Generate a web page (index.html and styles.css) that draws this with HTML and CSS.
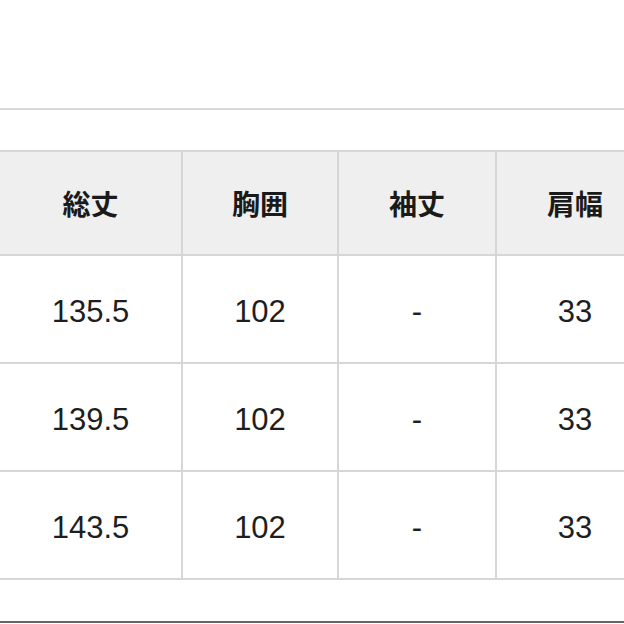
FILE: index.html
```html
<!DOCTYPE html>
<html lang="ja">
<head>
<meta charset="utf-8">
<link rel="stylesheet" href="styles.css">
</head>
<body>
<div class="page">
  <div class="top-space"></div>
  <div class="rule"></div>
  <table class="size-table">
    <thead>
      <tr>
        <th class="c1">総丈</th>
        <th class="c2">胸囲</th>
        <th class="c3">袖丈</th>
        <th class="c4">肩幅</th>
      </tr>
    </thead>
    <tbody>
      <tr><td>135.5</td><td>102</td><td>-</td><td>33</td></tr>
      <tr><td>139.5</td><td>102</td><td>-</td><td>33</td></tr>
      <tr><td>143.5</td><td>102</td><td>-</td><td>33</td></tr>
    </tbody>
  </table>
  <div class="bottom-space"></div>
  <div class="dark-rule"></div>
</div>
</body>
</html>
```

FILE: styles.css
```css
html, body {
  margin: 0;
  padding: 0;
  background: #ffffff;
}
body {
  width: 624px;
  height: 624px;
  overflow: hidden;
  font-family: "Liberation Sans", "Noto Sans CJK JP", sans-serif;
  color: #1e1e1e;
}
.page {
  display: flex;
  flex-direction: column;
  width: 624px;
}
.top-space {
  height: 108px;
}
.rule {
  height: 2px;
  background: #d9d9d9;
  margin-bottom: 40px;
}
.size-table {
  border-collapse: separate;
  border-spacing: 0;
  table-layout: fixed;
  width: 655px;
  border-top: 2px solid #d6d6d6;
}
.size-table th,
.size-table td {
  box-sizing: border-box;
  border-right: 2px solid #d6d6d6;
  border-bottom: 2px solid #d6d6d6;
  text-align: center;
  vertical-align: middle;
  padding: 0;
}
.size-table th {
  height: 104px;
  background: #efefef;
  font-family: "Noto Sans CJK JP", sans-serif;
  font-weight: 700;
  font-size: 28px;
  color: #1a1a1a;
}
.size-table td {
  height: 108px;
  padding-top: 6px;
  font-size: 31px;
  font-weight: 400;
  background: #ffffff;
}
.c1 { width: 183px; }
.c2 { width: 156px; }
.c3 { width: 158px; }
.c4 { width: 158px; }
.bottom-space {
  height: 41px;
}
.dark-rule {
  height: 2px;
  background: #666666;
}
```
